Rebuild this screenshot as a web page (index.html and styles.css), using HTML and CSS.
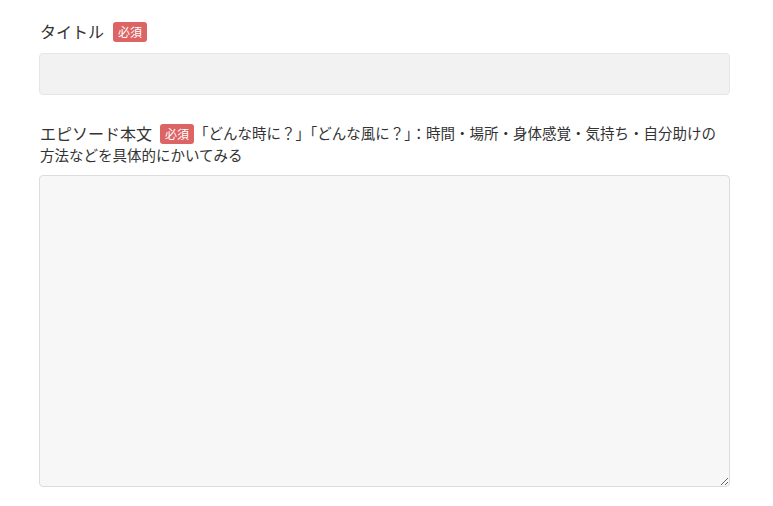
FILE: index.html
```html
<!DOCTYPE html>
<html lang="ja">
<head>
<meta charset="utf-8">
<link rel="stylesheet" href="styles.css">
</head>
<body>
<form class="form">
  <div class="group">
    <label class="label">タイトル<span class="badge">必須</span></label>
    <input class="input" type="text">
  </div>
  <div class="group group-body">
    <label class="label">エピソード本文<span class="badge">必須</span><span class="help">「どんな時に？」「どんな風に？」：時間・場所・身体感覚・気持ち・自分助けの方法などを具体的にかいてみる</span></label>
    <textarea class="textarea"></textarea>
  </div>
</form>
</body>
</html>
```
FILE: styles.css
```css
html, body {
  margin: 0;
  padding: 0;
  background: #fff;
}
body {
  font-family: "Noto Sans CJK JP", "Noto Sans", sans-serif;
  color: #333;
  font-size: 16px;
}
.form {
  padding: 20px 43px 0 39px;
}
.group {
  display: flex;
  flex-direction: column;
}
.group-body {
  margin-top: 27px;
}
.label {
  display: block;
  line-height: 22px;
  padding-left: 1px;
  margin-bottom: 11px;
  font-size: 16px;
}
.group-body .label {
  margin-bottom: 9px;
}
.help {
  font-size: 14.5px;
  line-height: 22px;
  vertical-align: top;
}
.badge {
  display: inline-block;
  background: #dd6464;
  color: #fff;
  font-size: 12px;
  line-height: 20px;
  padding: 0 5px;
  border-radius: 3px;
  margin: 0 0 0 9px;
  vertical-align: 1px;
}
.group-body .badge {
  margin-left: 8px;
}
.input {
  box-sizing: border-box;
  height: 42px;
  width: 100%;
  background: #f2f2f2;
  border: 1px solid #e6e6e6;
  border-radius: 4px;
  margin: 0;
}
.textarea {
  box-sizing: border-box;
  height: 312px;
  width: 100%;
  background: #f7f7f7;
  border: 1px solid #dcdcdc;
  border-radius: 4px;
  margin: 0;
  resize: both;
  display: block;
}
```
